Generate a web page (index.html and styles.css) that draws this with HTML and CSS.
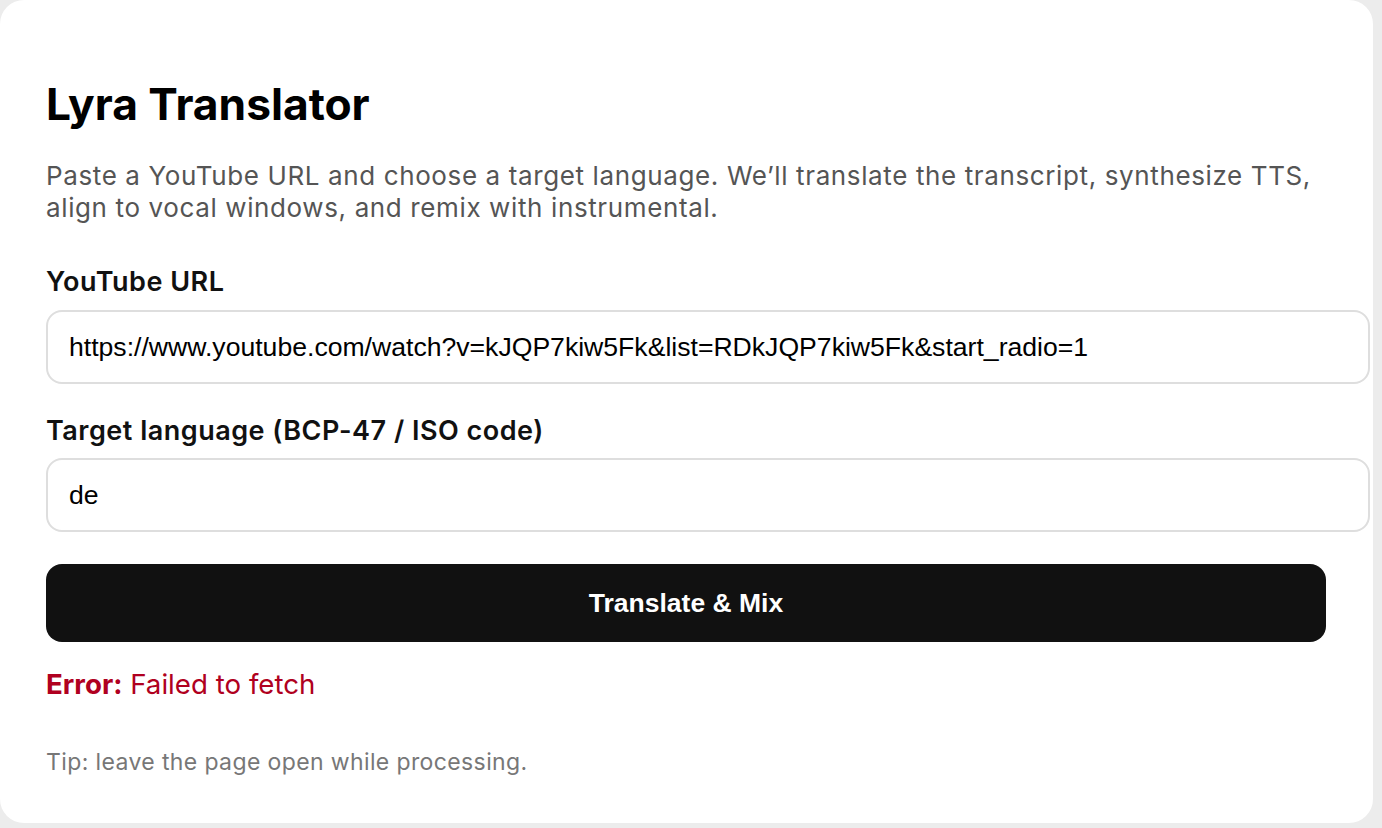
FILE: index.html
```html
<!DOCTYPE html>
<html lang="en">
<head>
<meta charset="utf-8">
<title>Lyra Translator</title>
<link rel="stylesheet" href="styles.css">
</head>
<body>
<main class="card">
  <h1 class="title">Lyra Translator</h1>
  <p class="desc">Paste a YouTube URL and choose a target language. We’ll translate the transcript, synthesize TTS, align to vocal windows, and remix with instrumental.</p>
  <form class="form">
    <label class="label" for="url">YouTube URL</label>
    <input class="input" id="url" type="text" value="https://www.youtube.com/watch?v=kJQP7kiw5Fk&amp;list=RDkJQP7kiw5Fk&amp;start_radio=1">
    <label class="label label-second" for="lang">Target language (BCP-47 / ISO code)</label>
    <input class="input" id="lang" type="text" value="de">
    <button class="button" type="button">Translate &amp; Mix</button>
  </form>
  <p class="error"><strong>Error:</strong> Failed to fetch</p>
  <p class="tip">Tip: leave the page open while processing.</p>
</main>
</body>
</html>
```
FILE: styles.css
```css
html, body {
  margin: 0;
  padding: 0;
  background: #ececec;
}
body {
  font-family: Inter, "Noto Sans", sans-serif;
  overflow: hidden;
}
.card {
  box-sizing: border-box;
  width: 1373px;
  height: 823px;
  background: #fff;
  border-radius: 24px;
  padding: 78px 47px 0 46px;
}
.title {
  margin: 0;
  font-size: 44.3px;
  line-height: 52px;
  font-weight: 700;
  color: #000;
}
.desc {
  margin: 30px 0 0;
  font-size: 26px;
  line-height: 32px;
  letter-spacing: 0.62px;
  color: #555;
}
.form {
  display: flex;
  flex-direction: column;
  margin-top: 43px;
}
.label {
  display: block;
  font-size: 27px;
  line-height: 30px;
  font-weight: 600;
  letter-spacing: 0.5px;
  color: #111;
  margin-bottom: 13px;
}
.label-second {
  margin-top: 32px;
  margin-bottom: 12px;
}
.input {
  box-sizing: content-box;
  width: 100%;
  height: 70px;
  padding: 0 19px 0 21px;
  border: 2px solid #dedede;
  border-radius: 16px;
  font-family: "Liberation Sans", Arial, sans-serif;
  font-size: 26.6px;
  color: #000;
  background: #fff;
  outline: none;
  margin: 0;
}
.button {
  margin-top: 32px;
  height: 78px;
  width: 100%;
  border: none;
  border-radius: 16px;
  background: #111;
  color: #fff;
  font-family: "Liberation Sans", Arial, sans-serif;
  font-weight: 700;
  font-size: 26.5px;
}
.error {
  margin: 26px 0 0;
  font-size: 27.7px;
  line-height: 32px;
  color: #b00020;
}
.error strong {
  font-weight: 700;
}
.tip {
  margin: 48px 0 0;
  font-size: 23px;
  line-height: 28px;
  letter-spacing: 0.38px;
  color: #777;
}
```
